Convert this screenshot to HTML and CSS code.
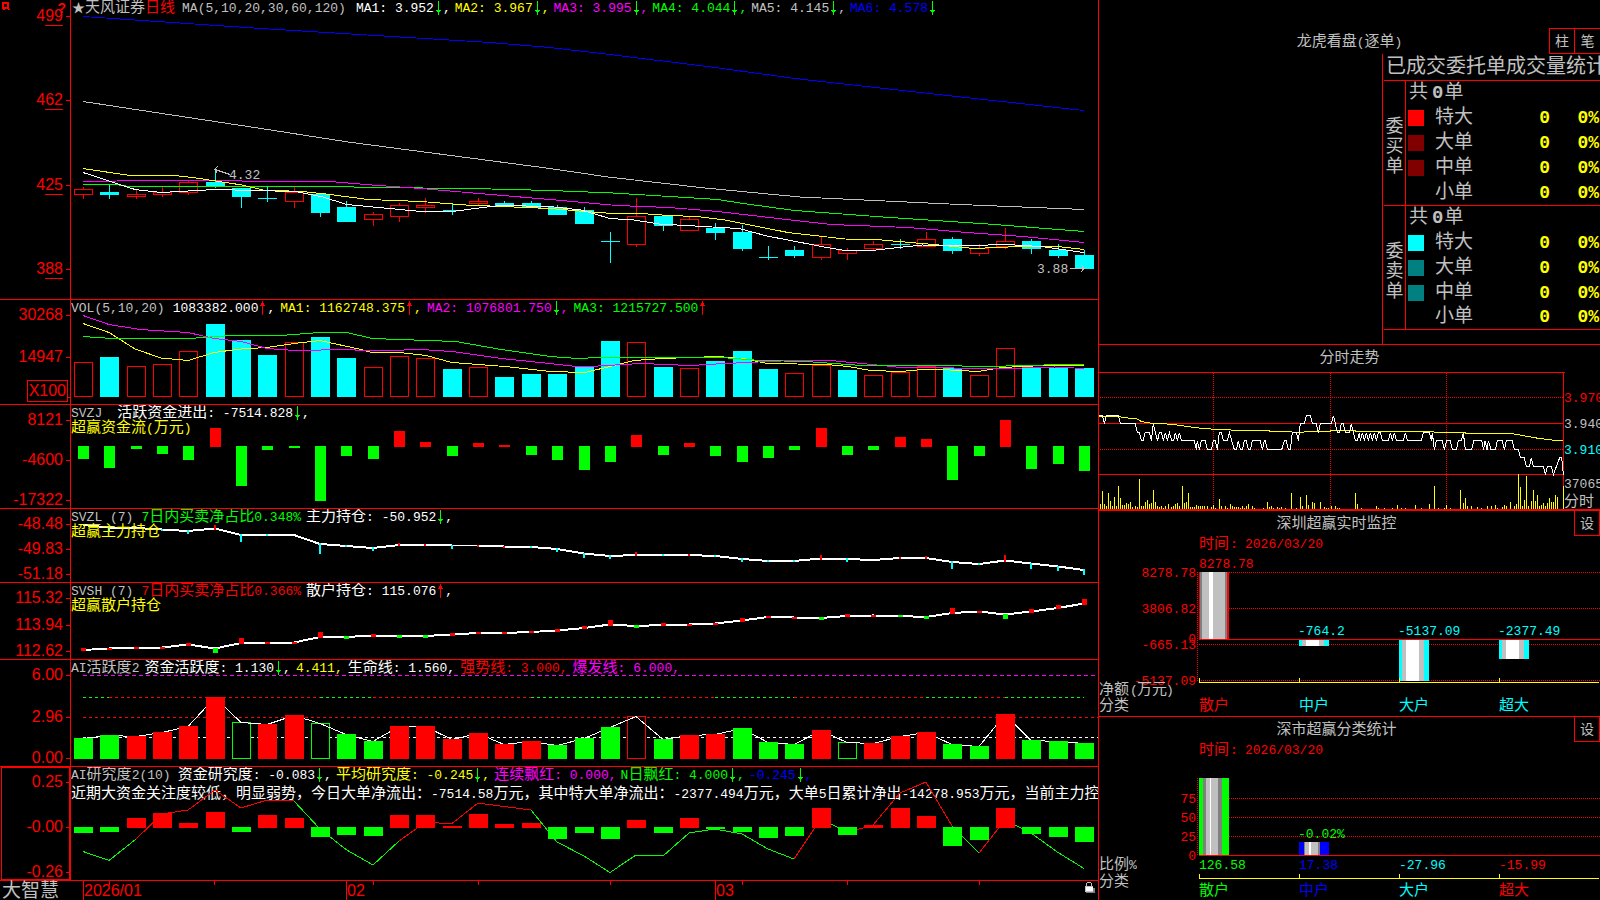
FILE: index.html
```html
<!DOCTYPE html>
<html lang="zh-CN">
<head>
<meta charset="utf-8">
<title>天风证券 日线 - 大智慧</title>
<link rel="stylesheet" href="styles.css">
</head>
<body>
<svg class="defs" aria-hidden="true">
  <symbol id="dn" viewBox="0 0 7 14"><path d="M3 0h1v14h-1zM1 9h2v1h1v-1h2v1h-1v1h-1v1h-1v-1h-1v-1h-1z" fill="#0f0"/></symbol>
  <symbol id="up" viewBox="0 0 7 14"><path d="M3 0h1v14h-1zM2 2h3v2h1v1h-2v-1h-1v1h-2v-1h1z" fill="red"/></symbol>
</svg>
<div class="screen">
  <main class="charts">
    <section class="panel">
      <div class="axis axis-main">
        <svg class="pin" viewBox="0 0 9 9"><path d="M0 0h7v7h1v1h-2v-1h-3v1h-2v-1h-1zM2 2v3h3v-3z" fill="red" fill-rule="evenodd"/></svg>
        <b class="help">?</b>
        <span class="u">499</span><span class="u">462</span><span class="u">425</span><span class="u">388</span>
      </div>
      <div class="plot">
        <svg id="kline" viewBox="71 0 1027 299"></svg>
        <div class="head head-main">
          <span class="silver">★<i>天风证券</i><i class="red">日线</i></span><span class="silver period">MA(5,10,20,30,60,120)</span>
          <span class="white wider">MA1: 3.952<svg><use href="#dn"/></svg>,</span>
          <span class="yellow">MA2: 3.967<svg><use href="#dn"/></svg>,</span>
          <span class="magenta">MA3: 3.995<svg><use href="#dn"/></svg>,</span>
          <span class="green">MA4: 4.044<svg><use href="#dn"/></svg>,</span>
          <span class="silver">MA5: 4.145<svg><use href="#dn"/></svg>,</span>
          <span class="blue">MA6: 4.578<svg><use href="#dn"/></svg></span>
        </div>
      </div>
    </section>
    <section class="panel">
      <div class="axis axis-vol"><span>30268</span><span>14947</span><span class="unit">X100</span></div>
      <div class="plot">
        <svg id="vol" viewBox="71 300 1027 104"></svg>
        <div class="head">
          <span class="silver">VOL(5,10,20)</span>
          <span class="white wide">1083382.000<svg><use href="#up"/></svg>,</span>
          <span class="yellow">MA1: 1162748.375<svg><use href="#up"/></svg>,</span>
          <span class="magenta">MA2: 1076801.750<svg><use href="#dn"/></svg>,</span>
          <span class="green">MA3: 1215727.500<svg><use href="#up"/></svg></span>
        </div>
      </div>
    </section>
    <section class="panel">
      <div class="axis"><span>8121</span><span>-4600</span><span>-17322</span></div>
      <div class="plot">
        <svg id="svzj" viewBox="71 405 1027 103"></svg>
        <div class="head">
          <span class="silver">SVZJ</span>
          <span class="white widest"><i>活跃资金进出</i>: -7514.828<svg><use href="#dn"/></svg>,</span>
        </div>
        <div class="sub"><i>超赢资金流</i>(<i>万元</i>)</div>
      </div>
    </section>
    <section class="panel">
      <div class="axis"><span>-48.48</span><span>-49.83</span><span>-51.18</span></div>
      <div class="plot">
        <svg id="svzl" viewBox="71 509 1027 73"></svg>
        <div class="head">
          <span class="silver">SVZL (7)</span>
          <span class="green wide">7<i>日内买卖净占比</i>0.348%</span>
          <span class="white"><i>主力持仓</i>: -50.952<svg><use href="#dn"/></svg>,</span>
        </div>
        <div class="sub"><i>超赢主力持仓</i></div>
      </div>
    </section>
    <section class="panel">
      <div class="axis"><span>115.32</span><span>113.94</span><span>112.62</span></div>
      <div class="plot">
        <svg id="svsh" viewBox="71 583 1027 76"></svg>
        <div class="head">
          <span class="silver">SVSH (7)</span>
          <span class="red wide">7<i>日内买卖净占比</i>0.366%</span>
          <span class="white"><i>散户持仓</i>: 115.076<svg><use href="#up"/></svg>,</span>
        </div>
        <div class="sub"><i>超赢散户持仓</i></div>
      </div>
    </section>
    <section class="panel">
      <div class="axis"><span>6.00</span><span>2.96</span><span>0.00</span></div>
      <div class="plot">
        <svg id="act" viewBox="71 660 1027 106"></svg>
        <div class="head">
          <span class="silver">AI<i>活跃度</i>2</span>
          <span class="white"><i>资金活跃度</i>: 1.130<svg><use href="#dn"/></svg>,</span>
          <span class="yellow">4.411,</span>
          <span class="white"><i>生命线</i>: 1.560,</span>
          <span class="red"><i>强势线</i>: 3.000,</span>
          <span class="magenta"><i>爆发线</i>: 6.000,</span>
        </div>
      </div>
    </section>
    <section class="panel">
      <div class="axis axis-study"><span>0.25</span><span>-0.00</span><span>-0.26</span></div>
      <div class="plot">
        <div class="head head-study">
          <span class="silver">AI<i>研究度</i>2(10)</span>
          <span class="white wide"><i>资金研究度</i>: -0.083<svg><use href="#dn"/></svg>,</span>
          <span class="yellow"><i>平均研究度</i>: -0.245<svg><use href="#dn"/></svg>,</span>
          <span class="magenta"><i>连续飘红</i>: 0.000,</span>
          <span class="green">N<i>日飘红</i>: 4.000<svg><use href="#dn"/></svg>,</span>
          <span class="blue">-0.245<svg><use href="#dn"/></svg>,</span>
        </div>
        <div class="comment"><i>近期大资金关注度较低，明显弱势，今日大单净流出：</i>-7514.58<i>万元，其中特大单净流出：</i>-2377.494<i>万元，大单</i>5<i>日累计净出</i>-14278.953<i>万元，当前主力控</i></div>
        <svg id="study" class="over" viewBox="71 767 1027 113"></svg>
      </div>
    </section>
    <footer class="dates">
      <div class="brand">大智慧</div>
      <svg id="dates" viewBox="71 881 1027 19"></svg>
    </footer>
  </main>

  <aside class="side">
    <section class="box orders">
      <header class="orders-head">
        <h2><i>龙虎看盘</i>(<i>逐单</i>)</h2>
        <div class="tabs"><button type="button">柱</button><button type="button">笔</button></div>
      </header>
      <div class="orders-body">
        <h3>已成交委托单成交量统计</h3>
        <table>
          <tbody>
            <tr><th rowspan="5" class="dir">委买单</th><td colspan="4" class="total">共<b>0</b>单</td></tr>
            <tr><td class="sw"><span class="s-red"></span></td><td>特大</td><td class="num">0</td><td class="num">0%</td></tr>
            <tr><td class="sw"><span class="s-maroon"></span></td><td>大单</td><td class="num">0</td><td class="num">0%</td></tr>
            <tr><td class="sw"><span class="s-maroon"></span></td><td>中单</td><td class="num">0</td><td class="num">0%</td></tr>
            <tr><td class="sw"></td><td>小单</td><td class="num">0</td><td class="num">0%</td></tr>
          </tbody>
          <tbody>
            <tr><th rowspan="5" class="dir">委卖单</th><td colspan="4" class="total">共<b>0</b>单</td></tr>
            <tr><td class="sw"><span class="s-cyan"></span></td><td>特大</td><td class="num">0</td><td class="num">0%</td></tr>
            <tr><td class="sw"><span class="s-teal"></span></td><td>大单</td><td class="num">0</td><td class="num">0%</td></tr>
            <tr><td class="sw"><span class="s-teal"></span></td><td>中单</td><td class="num">0</td><td class="num">0%</td></tr>
            <tr><td class="sw"></td><td>小单</td><td class="num">0</td><td class="num">0%</td></tr>
          </tbody>
        </table>
      </div>
    </section>
    <section class="box intraday">
      <h2><i>分时走势</i></h2>
      <svg id="intraday" viewBox="1099 372 501 138"></svg>
    </section>
    <section class="box">
      <header class="stat-head"><h2><i>深圳超赢实时监控</i></h2><button type="button">设</button></header>
      <svg id="monitor" viewBox="1099 536 501 180"></svg>
    </section>
    <section class="box last">
      <header class="stat-head"><h2><i>深市超赢分类统计</i></h2><button type="button">设</button></header>
      <svg id="stats" viewBox="1099 742 501 158"></svg>
    </section>
  </aside>
</div>
<script src="charts.js"></script>
</body>
</html>
```
FILE: styles.css
```css
* { box-sizing: border-box; }
body {
  margin: 0;
  background: #000;
  color: #c0c0c0;
  font: 13px/16px "Liberation Mono", "Noto Sans CJK SC", monospace;
  overflow-x: hidden;
}
i { font-style: normal; font-size: 15px; }
svg { display: block; width: 100%; height: auto; shape-rendering: crispEdges; }
.defs { position: absolute; width: 0; height: 0; }
h2, h3 { margin: 0; font-weight: normal; }

.silver { color: #c0c0c0; }
.white { color: #fff; }
.yellow { color: #ff0; }
.magenta { color: #f0f; }
.green { color: #0f0; }
.blue { color: #00f; }
.red { color: #f00; }

.screen {
  display: grid;
  grid-template-columns: minmax(0, 1098fr) minmax(0, 502fr);
  align-items: stretch;
}

/* left column */
.panel {
  display: grid;
  grid-template-columns: 71px minmax(0, 1fr);
  border-bottom: 1px solid #f00;
}
.axis {
  position: relative;
  display: flex;
  flex-direction: column;
  justify-content: space-between;
  align-items: flex-end;
  padding-top: 7px;
  border-right: 1px solid #f00;
  color: #f00;
  font: 16px/16px "Liberation Sans", Arial, sans-serif;
}
.axis span { position: relative; padding-right: 7px; }
.axis span::after {
  content: "";
  position: absolute;
  right: 0;
  top: 8px;
  width: 4px;
  height: 1px;
  background: #f00;
}
.axis .u::before {
  content: "";
  position: absolute;
  right: 7px;
  bottom: -2px;
  width: 18px;
  height: 1px;
  background: #f00;
}
.axis .unit {
  margin-right: 2px;
  padding: 2px 1px;
  border: 1px solid #f00;
}
.axis .unit::after { right: -3px; top: 16px; width: 3px; }
.pin { position: absolute; left: 2px; top: 2px; width: 9px; height: 9px; }
.help { position: absolute; right: 4px; top: 0; font-size: 14px; line-height: 16px; }
.axis-main { padding: 8px 0 22px; }
.axis-vol {
  display: grid;
  grid-template-columns: 1fr;
  grid-template-rows: 42px 1fr auto;
  justify-content: stretch;
  justify-items: end;
  align-items: start;
  padding-bottom: 2px;
}
.axis-study::before {
  content: "";
  position: absolute;
  inset: 0 0 0 1px;
  border: 1px solid #f00;
}

.plot { position: relative; overflow: hidden; min-width: 0; }
.head {
  position: absolute;
  top: 1px;
  left: 0;
  display: flex;
  gap: 5px;
  white-space: nowrap;
  line-height: 16px;
}
.head > span { height: 16px; }
.head > .wide { margin-left: 3px; }
.head > .wider { margin-left: 6px; }
.head > .widest { margin-left: 10px; }
.head svg { display: inline-block; width: 7px; height: 14px; margin: 0 1px; vertical-align: top; }
.head-main { padding-left: 1px; gap: 4px; }
.head-main > .period { margin-left: 3px; }
.head-study { gap: 4px; }
.sub { position: absolute; top: 16px; left: 0; color: #ff0; white-space: nowrap; }
.comment { position: absolute; top: 20px; left: 0; color: #fff; white-space: nowrap; }
.over { position: relative; }

.dates { display: grid; grid-template-columns: 71px minmax(0, 1fr); }
.brand { padding-left: 2px; font-size: 19px; line-height: 16px; font-family: "Noto Sans CJK SC", sans-serif; white-space: nowrap; }

/* right column */
.side { border-left: 1px solid #f00; min-width: 0; overflow: hidden; }
.box { border-bottom: 1px solid #f00; }
.box.last { border-bottom: 0; }
button {
  width: 26px;
  height: 26px;
  padding: 0 0 2px;
  background: #000;
  border: 1px solid #f00;
  color: #c0c0c0;
  font: 14px/20px "Noto Sans CJK SC", sans-serif;
}
h2 { font-size: 13px; text-align: center; white-space: nowrap; }

.orders-head {
  display: grid;
  grid-template-columns: 1fr auto 1fr;
  padding-top: 28px;
}
.orders-head h2 { grid-column: 2; padding-top: 7px; }
.tabs { display: flex; justify-content: flex-end; margin-right: -1px; }
.tabs button + button { border-left: 0; }
.orders-body {
  width: 218px;
  margin-left: auto;
  padding: 0 0 14px 1px;
  border-left: 1px solid #f00;
  overflow: hidden;
}
h3 { height: 26px; padding-left: 2px; font-size: 20px; line-height: 28px; white-space: nowrap; }
table { width: 100%; border-spacing: 0; border-collapse: separate; font-size: 19px; line-height: 22px; }
tbody td, tbody th { height: 25px; padding: 0; font-weight: normal; white-space: nowrap; }
tbody tr:first-child td, .dir { border-top: 1px solid #f00; }
tbody:last-child tr:last-child td, tbody:last-child .dir { border-bottom: 1px solid #f00; }
tbody .dir { width: 22px; padding: 8px 1px 0; border-right: 1px solid #f00; line-height: 20px; font-size: 18px; white-space: normal; word-break: break-all; }
.total b { padding: 0 1px 0 4px; }
tbody .total { padding-left: 3px; }
.sw { width: 29px; }
tbody .sw { padding-left: 2px; }
.sw span { display: block; width: 16px; height: 16px; }
.s-red { background: #f00; }
.s-maroon { background: #800000; }
.s-cyan { background: #0ff; }
.s-teal { background: #008080; }
tbody .num { padding-right: 1px; text-align: right; color: #ff0; font-weight: bold; font-size: 18px; }
.num:last-child { width: 49px; }

.intraday h2 { padding: 6px 0 5px; }
.stat-head { display: flex; align-items: flex-start; margin-top: -1px; }
.stat-head h2 { flex: 1; padding-top: 7px; }

/* chart labels */
text { font: 13px "Liberation Mono", "Noto Sans CJK SC", monospace; dominant-baseline: central; }
text.cn { font-size: 15px; }
text.sans { font: 16px "Liberation Sans", Arial, sans-serif; }
```
FILE: charts.js
```js
const NS = 'http://www.w3.org/2000/svg';
const RED = '#f00', CYAN = '#0ff', GREEN = '#0f0', WHITE = '#fff', YELLOW = '#ff0',
  MAGENTA = '#f0f', BLUE = '#00f', SILVER = '#c0c0c0', GRAY = '#808080';

const get = id => document.getElementById(id);
function add(svg, tag, attrs, text) {
  const el = document.createElementNS(NS, tag);
  for (const k in attrs) el.setAttribute(k, attrs[k]);
  if (text) el.textContent = text;
  svg.appendChild(el);
}
const rect = (s, x, y, w, h, fill) => add(s, 'rect', { x, y, width: w, height: h, fill });
const hollow = (s, x, y, w, h, stroke) =>
  add(s, 'rect', { x: x + 0.5, y: y + 0.5, width: w - 1, height: h - 1, fill: '#000', stroke });
const poly = (s, points, stroke, width = 1, dash = '') =>
  add(s, 'polyline', { points, fill: 'none', stroke, 'stroke-width': width, 'stroke-dasharray': dash });
const label = (s, x, y, fill, text, cls = '', anchor = 'start') =>
  add(s, 'text', { x, y, fill, class: cls, 'text-anchor': anchor }, text);

const STEP = 1001 / 38;
const cx = i => Math.floor(83.5 + i * STEP);

/* daily candles: kind, body top, body bottom, high, low */
const candles = `r189-194-187-199 c192-195-185-199 r194-196-190-199 r192-194-187-197 r182-192-181-195
c182-187-169-188 c188-197-188-208 c198-199-187-202 r192-201-187-208 c194-213-193-217 c207-222-201-222
r214-219-212-226 r205-216-203-222 r205-207-198-213 c210-211-203-215 r201-203-198-206 c203-206-201-207
c203-208-201-208 c207-215-205-215 c210-224-207-224 c241-242-232-263 r216-244-198-247 c216-226-216-231
r219-230-217-231 c228-233-223-240 c232-249-225-251 c257-258-246-260 c250-256-246-258 r244-257-237-260
r250-253-248-260 r244-248-241-250 c244-245-239-249 r239-246-232-247 c239-251-237-254 r248-253-244-256
r241-246-228-249 c241-249-239-254 c250-256-244-258 c255-269-250-269`.split(/\s+/);
const k = get('kline');
candles.forEach((c, i) => {
  const [t, b, h, l] = c.slice(1).split('-').map(Number);
  const x = cx(i);
  const color = c[0] === 'r' ? RED : CYAN;
  rect(k, x, h, 1, l - h, color);
  if (c[0] === 'r') hollow(k, x - 9, t, 19, b - t + 1, RED);
  else rect(k, x - 9, t, 19, b - t, CYAN);
});
poly(k, '83,16.5 150,21 261,28.5 400,37 490,42.5 550,47.5 610,54.5 715,67.5 795,78.5 929,93.5 1084,110.5', BLUE);
poly(k, '83,101.5 261,128.5 348,142 550,168.5 608,177 705,188 800,197 960,204.5 1084,209.5', SILVER);
poly(k, '83,184.5 115,184.5 130,186.5 354,187 491,189 550,190.5 613,193 718,199.5 743,203.5 795,210.5 883,217 988,224 1084,231.5', GREEN);
poly(k, '83,181.5 151,180.5 330,181.5 372,185 421,188.5 473,193 550,199.5 617,205.5 669,207.5 718,211.5 778,218.5 831,224.5 908,227.5 967,232.5 1023,236.5 1084,242.5', MAGENTA);
poly(k, '83,168.5 130,175.5 175,175.5 196,178 242,185 263,190 302,191.5 326,194 368,199.5 421,201.5 466,205 550,208.5 585,211.5 613,213.5 641,213.5 669,215.5 697,216.5 725,220 788,232.5 845,239 876,239.5 939,245 974,248.5 1020,246.5 1058,246.5 1084,249.5', YELLOW);
poly(k, '83,172.5 135,189.5 161,192.5 215,189.5 295,191.5 321,196.5 347,204.5 368,206.5 421,211.5 452,211.5 487,207 501,205.5 550,206.5 581,210 610,218.5 634,220 659,224 739,228.5 767,236 827,247.5 848,251 876,250 922,245 971,245.5 1006,244.5 1041,246.5 1084,252.5', WHITE);
poly(k, '230,174.5 215,169.5 218,166', SILVER);
poly(k, '215,170 217,173', SILVER);
label(k, 229, 175, SILVER, '4.32');
label(k, 1037, 269, SILVER, '3.88');
poly(k, '1070,268.5 1084,268.5', SILVER);
poly(k, '1081,265 1084,268.5 1081,272', SILVER);

/* volume */
const vol = `r362 c357 r366 r364 r351 c324 c340 c355 r342 c337 c358 r367 r356 r358 c369 r367 c377 c374 c374
c366 c341 r342 c367 r368 c361 c351 c369 r373 r365 c370 r375 r372 r366 c368 r375 r348 c368 c368 c368`.split(/\s+/);
const v = get('vol');
vol.forEach((c, i) => {
  const y = +c.slice(1), x = cx(i) - 9;
  if (c[0] === 'r') hollow(v, x, y, 19, 397 - y, RED);
  else rect(v, x, y, 19, 397 - y, CYAN);
});
poly(v, '83,323.5 109,332.5 135,349 161,358 188,360.5 214,352.5 241,349 267,347.5 294,343.5 320,340.5 361,349.5 372,352.5 400,352.5 426,355.5 452,362.5 505,366.5 550,371.5 585,372.5 610,366.5 634,360.5 662,358.5 718,356.5 746,359 767,363.5 827,364.5 848,366.5 871,370.5 901,371.5 922,369.5 940,369.5 978,371.5 1002,367.5 1044,365.5 1084,365.5', YELLOW);
poly(v, '83,315.5 109,324.5 140,329.5 188,332.5 214,338.5 241,341.5 267,348.5 295,350.5 347,349.5 372,351 421,349.5 452,351.5 501,358.5 550,363.5 581,367 641,363.5 690,365.5 725,363.5 781,361 831,360.5 887,366 901,367.5 1006,368.5 1055,367 1084,368.5', MAGENTA);
poly(v, '83,336.5 112,338.5 189,338.5 231,335.5 280,335.5 320,332.5 347,332.5 372,338.5 456,341.5 501,349.5 550,356.5 578,358.5 599,357.5 722,357.5 760,360.5 806,361.5 862,365.5 936,365.5 988,366.5 1044,365 1084,364.5', GREEN);

/* fund flow */
const flow = [459, 468, 449, 454, 460, 428, 486, 450, 448, 501, 456, 459, 431, 442, 456, 443, 445, 455, 460,
  470, 462, 435, 455, 443, 456, 462, 458, 450, 428, 455, 450, 437, 439, 480, 456, 420, 469, 464, 471];
const f = get('svzj');
flow.forEach((y, i) => {
  if (y < 447) rect(f, cx(i) - 5, y, 11, 447 - y, RED);
  else rect(f, cx(i) - 5, 446, 11, y - 446, GREEN);
});

/* holding lines with change marks */
function holding(svg, ys, marks, w, down) {
  poly(svg, ys.map((y, i) => `${cx(i)},${y}`).join(' '), WHITE, 2);
  marks.forEach((m, i) => {
    if (m > 0) rect(svg, cx(i) - (w >> 1), Math.round(ys[i]) - m, w, m + 1, RED);
    if (m < 0) rect(svg, cx(i) - (w >> 1), Math.round(ys[i]) - 1, w, 1 - m, down);
  });
}
holding(get('svzl'),
  [525, 527.5, 528, 529.5, 531, 528.5, 535, 535, 535, 544, 546, 548, 545, 545, 545.5, 545.5, 546.5, 547, 549, 553.5,
    556, 555, 555, 555, 556, 559, 561, 561, 558.5, 559, 560, 558, 558, 562, 564, 560.5, 563.5, 566.5, 570],
  [0, -3, 0, -1, -3, 4, -7, -1, 0, -10, -1, -3, 2, 1, -3, 1, 1, -1, -3, -4, -3, 3, -1, 1, -1, -3, -1, -1, 4, -3, 0, 1, 2, -7,
    -1, 6, -5, -4, -5], 2, CYAN);
holding(get('svsh'),
  [650, 648.5, 648, 647.5, 644.5, 648.5, 643, 643, 642.5, 637, 637, 635.5, 636, 636, 634.5, 633, 633, 632, 630.5,
    628, 624.5, 626, 625, 624.5, 623.5, 620.5, 617, 617.5, 618, 616, 615.5, 616, 617, 613, 611.5, 614.5, 611.5, 608, 603.5],
  [2, 1, 1, 1, 2, -4, 5, 1, 1, 5, -2, 2, -2, -2, 2, 1, 1, 1, 2, 2, 5, -2, 2, 1, 1, 3, 1, 1, -2, 2, 1, -1, -2, 5, 1, -4, 3, 3, 5],
  5, GREEN);

/* activity: lower case = filled, upper case = outline */
const act = `g738 g735 r736 r732 r726 r697 G722 r724 r715 G723 g734 g741 r726 r726 r739 r733 r744 r741 g745
g738 g727 R716 g739 r735 r734 g728 g742 g744 r730 G742 r743 r736 r732 g744 g746 r714 g740 g741 g743`.split(/\s+/);
const a = get('act');
poly(a, '83,675.5 1098,675.5', MAGENTA, 1, '4 3');
[[0, 1, GREEN], [1, 9, RED], [9, 11, GREEN], [11, 17, RED], [17, 22, GREEN], [22, 24, RED], [24, 27, GREEN],
  [27, 32, RED], [32, 34, GREEN], [34, 35, RED], [35, 38, GREEN]].forEach(([p, q, c]) =>
  poly(a, `${cx(p)},697.5 ${cx(q)},697.5`, c, 1, '3 3'));
poly(a, '83,717.5 1098,717.5', RED, 1, '3 3');
poly(a, '83,737.5 1098,737.5', WHITE, 1, '3 3');
act.forEach((c, i) => {
  const y = +c.slice(1), x = cx(i) - 9, color = /g/i.test(c[0]) ? GREEN : RED;
  if (/[GR]/.test(c[0])) hollow(a, x, y, 19, 759 - y, color);
});
poly(a, act.map((c, i) => `${cx(i)},${+c.slice(1) + 0.5}`).join(' '), WHITE);
act.forEach((c, i) => {
  const y = +c.slice(1), x = cx(i) - 9;
  if (/[gr]/.test(c[0])) rect(a, x, y, 19, 759 - y, c[0] === 'g' ? GREEN : RED);
});

/* study */
const study = [833, 832, 818, 813, 823, 812, 832, 815, 818, 837, 835, 836, 815, 815, 826, 814, 824, 823, 839, 833,
  839, 820, 833, 818, 829, 832, 838, 836, 808, 835, 825, 808, 816, 846, 840, 808, 834, 837, 842];
const trend = [851.5, 860.5, 839, 814, 810, 790, 808, 800, 801, 829, 849.5, 865, 841, 822.5, 823.5, 803, 806.5, 810,
  842, 856, 872.5, 855, 856, 833, 829, 834, 849, 859, 818.5, 832.5, 825, 793, 782, 826, 853, 820, 833, 852.5, 868.5];
const s = get('study');
[[0, 2, GREEN], [2, 8, RED], [8, 12, GREEN], [12, 17, RED], [17, 27, GREEN], [27, 28, RED], [28, 29, GREEN],
  [29, 33, RED], [33, 34, GREEN], [34, 35, RED], [35, 38, GREEN]].forEach(([p, q, c]) =>
  poly(s, trend.slice(p, q + 1).map((y, i) => `${cx(p + i)},${y}`).join(' '), c));
study.forEach((y, i) => {
  if (y < 828) rect(s, cx(i) - 9, y, 19, 828 - y, RED);
  else rect(s, cx(i) - 9, 827, 19, y - 827, GREEN);
});

/* date ruler */
const d = get('dates');
[[83, '2026/01'], [346, '02'], [715, '03']].forEach(([x, t]) => {
  rect(d, x, 881, 1, 19, RED);
  label(d, x + 1, 890, RED, t, 'sans');
});
[109, 214, 373, 478, 610, 742, 847, 979].forEach(x => rect(d, x, 881, 1, 4, RED));
rect(d, 1087, 882, 4, 1, SILVER);
rect(d, 1086, 883, 1, 3, SILVER);
rect(d, 1091, 883, 1, 3, SILVER);
rect(d, 1086, 888, 9, 5, GRAY);
rect(d, 1085, 886, 8, 6, SILVER);
rect(d, 1086, 887, 7, 4, WHITE);

/* intraday: x in thirds of a pixel from 1095, level in price ticks */
const t = get('intraday');
const X = x => 1095 + x / 3, Y = y => 340 + y / 3;
rect(t, 1099, 372, 466, 1, RED);
rect(t, 1563, 372, 1, 138, RED);
rect(t, 1099, 423, 465, 1, RED);
rect(t, 1099, 474, 465, 1, RED);
rect(t, 1099, 509, 501, 1, RED);
[397.5, 449.5].forEach(y => poly(t, `1100,${y} 1563,${y}`, RED, 1, '1 1'));
[1213.5, 1330.5, 1446.5].forEach(x => poly(t, `${x},373 ${x},509`, RED, 1, '1 1'));
`16 492,22 453,28 492,34 498,40 459,46 483,52 498,58 471,64 498,70 438,76 474,82 495,88 495,94 489,100 492,106 486,112 500,120 497,127 500,133 417,139 498,145 498,151 486,157 480,163 492,169 489,175 450,181 486,187 498,193 500,199 498,205 503,211 498,220 492,230 500,236 498,241 492,247 489,253 498,262 438,268 489,274 486,280 459,286 500,292 500,298 500,304 495,310 498,316 498,322 498,328 498,337 498,349 500,355 495,361 503,373 477,379 498,391 498,397 503,406 492,412 498,418 500,424 500,430 500,436 503,442 498,448 503,454 498,460 492,472 498,478 503,505 503,517 486,523 500,529 498,535 503,547 500,553 503,559 500,571 503,589 459,604 503,616 471,622 498,634 465,640 495,652 486,658 489,676 486,688 500,694 503,700 503,709 498,721 497,727 503,733 503,781 459,787 492,799 503,844 498,850 503,868 503,892 503,907 495,919 503,931 503,961 495,979 503,1003 492,1018 438,1030 503,1048 503,1054 495,1066 503,1096 450,1105 489,1111 474,1117 498,1130 498,1148 500,1160 503,1176 498,1190 498,1201 495,1207 503,1222 500,1228 495,1234 498,1246 486,1258 498,1264 492,1270 402,1276 441,1282 498,1288 480,1294 408,1300 498,1309 483,1315 450,1321 483,1327 465,1333 497,1339 495,1345 489,1351 498,1357 489,1363 474,1369 486,1375 486,1381 465,1387 471,1405 438`
  .split(',').forEach(p => {
    const [x, y] = p.split(' ').map(Number);
    const top = Math.round(Y(y));
    rect(t, Math.floor(X(x)), top, 1, 509 - top, YELLOW);
  });
poly(t, [[12, 230], [75, 230], [85, 233], [125, 236], [140, 245], [170, 250], [205, 251], [240, 254], [300, 263], [360, 268],
  [430, 271], [510, 271], [530, 274], [620, 277], [640, 274], [700, 274], [720, 271], [775, 271], [785, 274], [1010, 274],
  [1020, 277], [1105, 277], [1115, 280], [1250, 281], [1280, 286], [1330, 295], [1370, 300], [1405, 301]]
  .map(([x, y]) => `${X(x)},${Y(y)}`).join(' '), YELLOW);
const levels = [227, 251, 278, 302, 329, 353, 380, 404];
poly(t, '12,0 22,0 28,1 34,0 70,0 76,1 121,1 127,2 133,2 139,3 145,3 150,2 163,2 169,3 175,1 181,2 188,3 193,2 199,2 205,3 211,2 217,3 223,2 230,3 236,3 241,2 247,3 253,2 259,3 298,3 304,4 307,3 313,4 319,3 331,3 337,4 349,4 355,3 361,3 367,4 373,2 379,2 385,3 397,3 403,2 410,3 418,4 424,4 430,3 436,4 442,4 448,3 454,3 460,4 466,4 472,3 496,3 502,4 508,3 511,3 517,4 560,4 568,3 574,3 580,4 586,4 592,2 604,2 610,3 616,1 628,1 634,0 646,0 652,1 664,1 670,2 676,1 709,1 715,0 721,1 727,2 733,2 739,1 745,1 751,2 763,2 769,1 775,2 781,3 787,3 793,2 796,3 802,2 808,3 814,2 820,3 826,2 832,3 838,2 844,3 850,2 856,2 862,3 880,3 886,2 892,3 898,2 904,3 925,3 931,2 937,3 979,3 985,2 1003,2 1009,3 1012,2 1018,4 1024,3 1042,3 1048,4 1055,3 1066,3 1072,4 1084,4 1090,3 1099,3 1105,2 1111,4 1130,4 1136,3 1160,3 1166,4 1170,3 1176,4 1180,3 1188,4 1201,4 1207,3 1222,3 1228,4 1234,3 1252,3 1258,4 1270,4 1276,5 1288,5 1294,6 1303,6 1309,5 1315,6 1345,6 1351,7 1357,6 1369,6 1375,7 1384,6 1394,5 1400,5 1405,7'
  .split(' ').map(p => {
    const [x, l] = p.split(',').map(Number);
    return `${X(x)},${Y(levels[l])}`;
  }).join(' '), WHITE);
label(t, 1564, 398, RED, '3.970');
label(t, 1564, 424, SILVER, '3.940');
label(t, 1564, 450, CYAN, '3.910');
label(t, 1564, 484, SILVER, '37065');
label(t, 1564, 502, SILVER, '分时', 'cn');

/* striped column: list of [width, colour] */
function column(svg, x, y, h, stripes) {
  stripes.forEach(([w, c]) => { rect(svg, x, y, w, h, c); x += w; });
}
function baseAxis(svg, y) {
  rect(svg, 1199, y, 400, 1, YELLOW);
  [1199, 1299, 1399, 1499].forEach(x => rect(svg, x, y - 4, 1, 4, YELLOW));
}
function dateLine(svg, y) {
  label(svg, 1199, y, RED, '时间', 'cn');
  label(svg, 1230, y, RED, ':');
  label(svg, 1245, y, RED, '2026/03/20');
}

const m = get('monitor');
dateLine(m, 544);
label(m, 1199, 564, RED, '8278.78');
[572.5, 608.5, 644.5, 680.5].forEach(y => poly(m, `1199,${y} 1600,${y}`, RED, 1, '1 1'));
poly(m, '1197.5,572 1197.5,681', RED, 1, '1 1');
rect(m, 1199, 639, 401, 1, RED);
[[573, '8278.78'], [609, '3806.82'], [639, '0'], [645, '-665.13'], [681, '-5137.09']]
  .forEach(([y, n]) => label(m, 1196, y, RED, n, '', 'end'));
column(m, 1199, 572, 67, [[1, RED], [2, GRAY], [7, SILVER], [4, WHITE], [12, SILVER], [2, GRAY], [2, RED]]);
const cool = [[3, CYAN], [4, SILVER], [13, WHITE], [5, SILVER], [5, CYAN]];
column(m, 1299, 640, 6, cool);
column(m, 1399, 640, 41, cool);
column(m, 1499, 640, 19, cool);
label(m, 1298, 631, CYAN, '-764.2');
label(m, 1398, 631, CYAN, '-5137.09');
label(m, 1498, 631, CYAN, '-2377.49');
baseAxis(m, 682);
label(m, 1099, 690, SILVER, '净额', 'cn');
label(m, 1130, 690, SILVER, '(');
label(m, 1137, 690, SILVER, '万元', 'cn');
label(m, 1166, 690, SILVER, ')');
label(m, 1099, 706, SILVER, '分类', 'cn');
['散户', '中户', '大户', '超大'].forEach((n, i) => label(m, 1199 + i * 100, 706, i ? CYAN : RED, n, 'cn'));

const q = get('stats');
dateLine(q, 750);
[798.5, 817.5, 836.5].forEach(y => poly(q, `1199,${y} 1600,${y}`, RED, 1, '1 1'));
poly(q, '1197.5,778 1197.5,855', RED, 1, '1 1');
rect(q, 1199, 855, 401, 1, RED);
[[799, '75'], [818, '50'], [837, '25'], [856, '0']].forEach(([y, n]) => label(q, 1196, y, RED, n, '', 'end'));
column(q, 1199, 778, 77, [[4, GREEN], [3, GRAY], [4, SILVER], [1, WHITE], [7, SILVER], [4, GRAY], [7, GREEN]]);
column(q, 1299, 842, 13, [[5, BLUE], [1, GRAY], [4, SILVER], [2, WHITE], [7, SILVER], [2, GRAY], [9, BLUE]]);
label(q, 1298, 834, GREEN, '-0.02%');
baseAxis(q, 878);
[['126.58', '散户', GREEN], ['17.38', '中户', BLUE], ['-27.96', '大户', CYAN], ['-15.99', '超大', RED]]
  .forEach(([n, c, col], i) => {
    label(q, 1199 + i * 100, 865, col, n);
    label(q, 1199 + i * 100, 891, col, c, 'cn');
  });
label(q, 1099, 865, SILVER, '比例', 'cn');
label(q, 1129, 865, SILVER, '%');
label(q, 1099, 882, SILVER, '分类', 'cn');
```
